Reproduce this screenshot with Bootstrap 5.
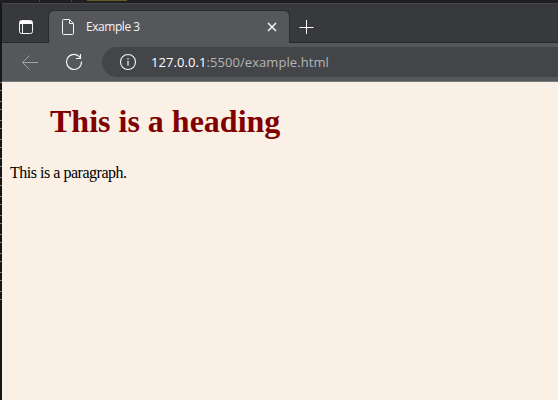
<!DOCTYPE html>
<html lang="en">
<head>
<meta charset="utf-8">
<meta name="viewport" content="width=device-width, initial-scale=1">
<title>Example 3</title>
<link href="https://cdn.jsdelivr.net/npm/bootstrap@5.3.0/dist/css/bootstrap.min.css" rel="stylesheet">
<style>
body { background: #1e1f1e; height: 400px; font-family: "Open Sans", "Noto Sans", sans-serif; }
.desk-strip { height: 3px; background: linear-gradient(#625c25, #625c25) 87px 0 / 40px 1px no-repeat, linear-gradient(#444, #444) 39px 0 / 1px 2px no-repeat, linear-gradient(#444, #444) 71px 0 / 1px 2px no-repeat; }
.desk-edge { width: 2px; background: repeating-linear-gradient(#777 0 1px, #161716 1px 8px, #777 8px 9px, #161716 9px 19px) 0 79px / 2px 218px no-repeat, #161716; }
.tab-strip { height: 40px; background: #38393c; border-top: 1px solid #444547; }
.strip-cell { height: 39px; border-bottom: 1px solid #27282b; }
.strip-left { width: 47px; border-bottom-right-radius: 4px; padding: 8px 0 0 17px; }
.active-tab { width: 240px; height: 32px; background: #56575b; border-radius: 5px 5px 0 0; box-shadow: 0 0 0 1px #2a2b2e; padding: 0 12px; }
.tab-title { font-size: 12px; line-height: 16px; color: #f4f4f4; margin-left: 11px; letter-spacing: -.45px; }
.strip-right { border-bottom-left-radius: 4px; padding: 15px 0 0 10px; }
.tool-row { height: 39px; background: #56575b; border-bottom: 1px solid #77787a; padding-left: 19px; }
.address { height: 30px; background: #444548; border-radius: 15px 0 0 15px; margin-left: 18px; padding-left: 17px; }
.address-text { font-size: 13px; line-height: 20px; color: #b4b5b7; margin-left: 14px; white-space: nowrap; letter-spacing: .07px; }
.address-host { color: #fff; }
.viewport { background: #faf0e6; font-family: "Liberation Serif", serif; color: #000; padding: 21px 8px 0; }
.page-title { color: maroon; font-size: 32px; line-height: 37px; font-weight: 700; margin: 0 0 24px 40px; }
.page-text { font-size: 16px; line-height: 18px; letter-spacing: -.48px; margin: 0; }
svg { display: block; flex: none; fill: none; stroke: #f5f5f5; }
</style>
<script src="https://cdn.jsdelivr.net/npm/bootstrap@5.3.0/dist/js/bootstrap.bundle.min.js"></script>
</head>
<body class="d-flex flex-column overflow-hidden">
<div class="desk-strip flex-shrink-0"></div>
<div class="d-flex flex-grow-1">
  <div class="desk-edge flex-shrink-0"></div>
  <div class="d-flex flex-column flex-grow-1">
    <div class="tab-strip d-flex align-items-end">
      <div class="strip-cell strip-left"><svg width="14" height="30" viewBox="0 0 14 30"><rect x=".5" y="8.500" width="13" height="13" rx="2"/><path d="M1 9h12v3H1z" fill="#fff" stroke="none"/><path d="M3.500 12v9"/></svg></div>
      <div class="active-tab d-flex align-items-center">
        <svg width="14" height="18" viewBox="0 0 14 18"><path d="M2.500 1.500h6l4 4v10q0 1-1 1h-9q-1 0-1-1v-13q0-1 1-1zM8.500 1.500v4h4"/></svg>
        <span class="tab-title">Example 3</span>
        <svg class="ms-auto" width="10" height="10" viewBox="0 0 10 10"><path d="M1 1l8 8M9 1L1 9" stroke-width="1.500"/></svg>
      </div>
      <div class="strip-cell strip-right flex-grow-1"><svg width="16" height="16" viewBox="0 0 16 16"><path d="M7.500 1v14M.5 8.500h14" stroke="#fff"/></svg></div>
    </div>
    <div class="tool-row d-flex align-items-center">
      <svg width="18" height="16" viewBox="0 0 18 16"><path d="M17 8.500H1.500M8.500 1.500l-7 7 7 7" stroke="#a0a1a3"/></svg>
      <svg class="ms-4" width="21" height="18" viewBox="-1 0 21 18"><path d="M17.500 8.500A7.500 7.500 0 1 1 14.800 3.200L16.300 4.800M16.500 1v4.500H12" stroke-width="1.150"/></svg>
      <div class="address d-flex align-items-center flex-grow-1">
        <svg width="18" height="18" viewBox="0 0 18 18"><circle cx="9" cy="9" r="7.500" stroke-width="1.100"/><path d="M9 7.800v5M9 5v1.500" stroke-width="1.500" stroke="#ccc"/></svg>
        <span class="address-text"><span class="address-host">127.0.0.1</span>:5500/example.html</span>
      </div>
    </div>
    <main class="viewport flex-grow-1">
      <h1 class="page-title">This is a heading</h1>
      <p class="page-text">This is a paragraph.</p>
    </main>
  </div>
</div>
</body>
</html>
